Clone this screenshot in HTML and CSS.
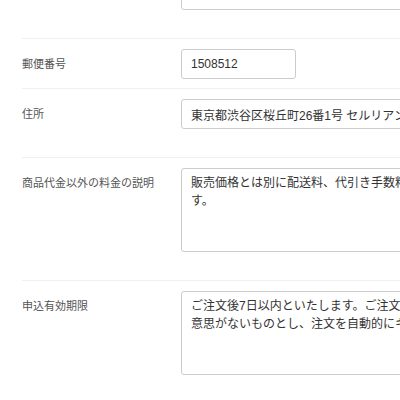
FILE: index.html
```html
<!DOCTYPE html>
<html lang="ja">
<head>
    <meta charset="UTF-8">
    <meta name="viewport" content="width=device-width, initial-scale=1.0">
    <title>特定商取引法に基づく表記</title>
    <link rel="stylesheet" href="styles.css">
</head>
<body>
    <form class="form">
        <div class="row row-first row-tall">
            <div class="label"></div>
            <div class="field">
                <input type="text" class="input input-wide" name="tel">
            </div>
        </div>

        <div class="row">
            <label class="label" for="zip">郵便番号</label>
            <div class="field">
                <input type="text" class="input input-zip" id="zip" name="zip" value="1508512">
            </div>
        </div>

        <div class="row row-tall">
            <label class="label" for="address">住所</label>
            <div class="field">
                <input type="text" class="input input-wide" id="address" name="address" value="東京都渋谷区桜丘町26番1号 セルリアンタワー15F">
            </div>
        </div>

        <div class="row row-tall">
            <label class="label" for="charge">商品代金以外の料金の説明</label>
            <div class="field">
                <textarea class="input textarea" id="charge" name="charge">販売価格とは別に配送料、代引き手数料、振込手数料が別途必要となります。</textarea>
            </div>
        </div>

        <div class="row row-tall">
            <label class="label" for="expire">申込有効期限</label>
            <div class="field">
                <textarea class="input textarea" id="expire" name="expire">ご注文後7日以内といたします。ご注文後7日間ご入金がない場合は、購入の意思がないものとし、注文を自動的にキャンセルとさせていただきます。</textarea>
            </div>
        </div>
    </form>
</body>
</html>
```

FILE: styles.css
```css
body {
    margin: 0;
    font-family: "Liberation Sans", "Noto Sans CJK JP", sans-serif;
    background-color: #fff;
    overflow: hidden;
}
.form {
    margin-top: -20px;
    padding-left: 22px;
}
.row {
    display: flex;
    border-top: 1px solid #efefef;
    padding: 10px 0 9px;
}
.row-first {
    border-top: none;
    padding-top: 0;
}
.row-tall {
    padding-bottom: 28px;
}
.label {
    flex: 0 0 159px;
    padding-top: 7px;
    font-size: 11px;
    line-height: 16px;
    color: #555;
}
.input {
    box-sizing: border-box;
    height: 30px;
    margin: 0;
    padding: 0 9px;
    font-family: inherit;
    font-size: 12px;
    color: #333;
    background-color: #fff;
    border: 1px solid #ccc;
    border-radius: 3px;
}
.input-zip {
    width: 115px;
}
.input-wide {
    width: 429px;
}
.textarea {
    display: block;
    width: 429px;
    height: 84px;
    padding: 5px 9px;
    line-height: 18px;
    resize: none;
    overflow: hidden;
}
```
